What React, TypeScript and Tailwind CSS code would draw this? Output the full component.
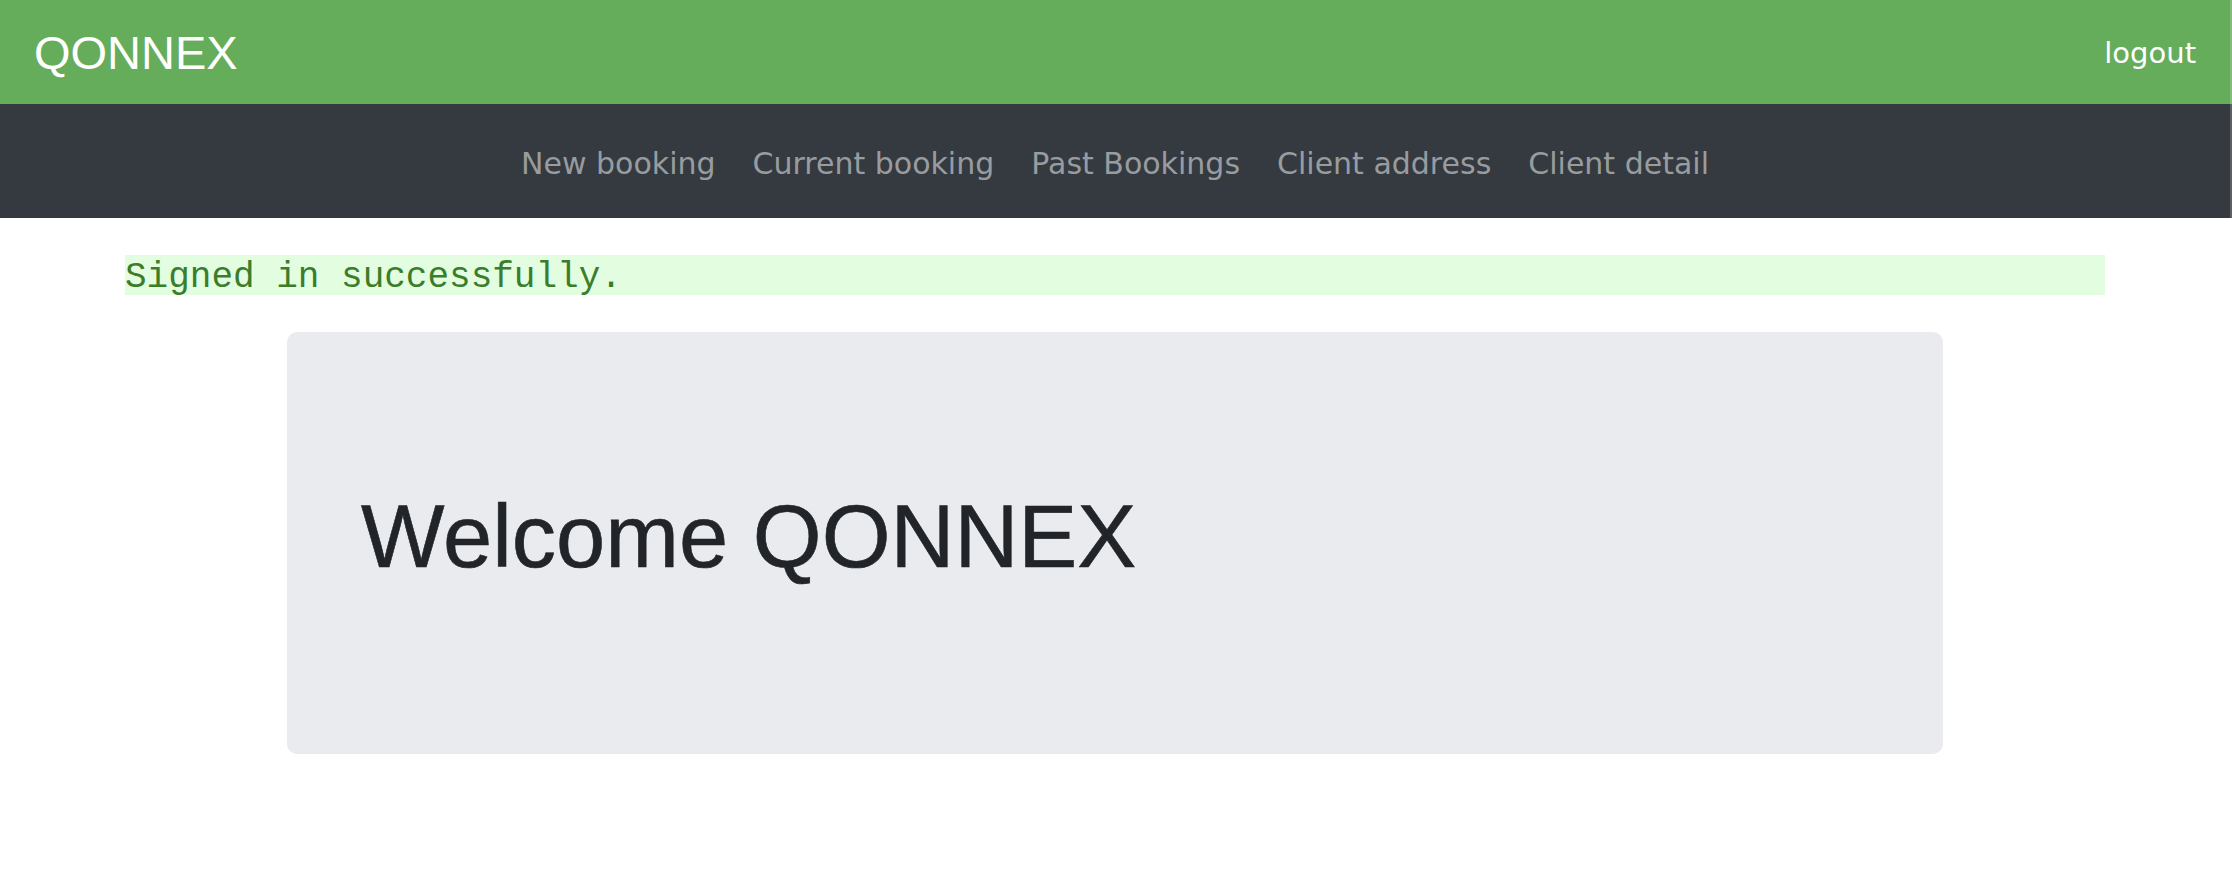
import React from "react";

const navItems = ["New booking", "Current booking", "Past Bookings", "Client address", "Client detail"];

export default function App() {
  return (
    <div className="min-h-[892px] bg-white">
      <div className="flex">
        <div className="flex-1">
          <header className="flex h-[104px] items-center justify-between bg-[#66ad5b] pl-[34px] pr-[34px]">
            <span className="font-['Liberation_Sans',Arial,sans-serif] text-[47px] leading-none text-white">QONNEX</span>
            <a className="pt-[3px] font-['DejaVu_Sans',sans-serif] text-[29px] leading-none text-white">logout</a>
          </header>
          <nav className="flex h-[114px] items-center justify-center bg-[#343a40] pt-[5px]">
            {navItems.map((item) => (
              <a
                key={item}
                className="px-[18.5px] font-['DejaVu_Sans',sans-serif] text-[30px] leading-none text-[#999c9f]"
              >
                {item}
              </a>
            ))}
          </nav>
        </div>
        <div className="flex w-[2px] flex-col">
          <div className="h-[104px] bg-[#85bb7c]" />
          <div className="h-[114px] bg-[#5c6064]" />
        </div>
      </div>
      <main className="pr-[2px]">
        <p className="mx-[125px] mt-[37px] flex h-[40px] items-center bg-[#e3fde0] pt-[5px] font-['Liberation_Mono','Courier_New',monospace] text-[36px] leading-none text-[#3a7d2a]">
          Signed in successfully.
        </p>
        <div className="mx-auto mt-[37px] h-[422px] w-[1656px] rounded-[10px] bg-[#e9ebef] pl-[74px] pt-[161px]">
          <h1 className="font-['Liberation_Sans',Arial,sans-serif] text-[88.5px] font-normal leading-none text-[#212529] [-webkit-text-stroke:0.6px_#212529]">
            Welcome QONNEX
          </h1>
        </div>
      </main>
    </div>
  );
}
